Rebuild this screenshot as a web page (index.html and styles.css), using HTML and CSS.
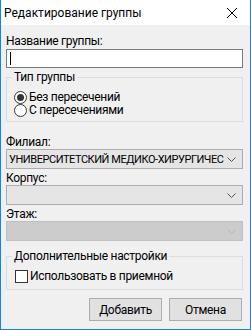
FILE: index.html
```html
<!DOCTYPE html>
<html lang="ru">
<head>
    <meta charset="UTF-8">
    <meta name="viewport" content="width=device-width, initial-scale=1.0">
    <title>Редактирование группы</title>
    <link rel="stylesheet" href="styles.css">
</head>
<body>
    <div class="window">
        <div class="titlebar">
            <span class="title">Редактирование группы</span>
            <svg class="close" width="10" height="10" viewBox="0 0 10 10">
                <path d="M0 0 L10 10 M10 0 L0 10" stroke="#000" stroke-width="1" fill="none"/>
            </svg>
        </div>
        <div class="content">
            <div class="field-label first">Название группы:</div>
            <div class="textbox"><span class="caret"></span></div>

            <fieldset class="group group-type">
                <legend>Тип группы</legend>
                <div class="option"><span class="radio checked"></span>Без пересечений</div>
                <div class="option"><span class="radio"></span>С пересечениями</div>
            </fieldset>

            <div class="field-label">Филиал:</div>
            <div class="combo">
                <span class="combo-text">УНИВЕРСИТЕТСКИЙ МЕДИКО-ХИРУРГИЧЕС</span>
                <span class="combo-arrow">
                    <svg width="9" height="5" viewBox="0 0 9 5"><polyline points="0.5,0.5 4.5,4.5 8.5,0.5" fill="none" stroke="#555" stroke-width="1"/></svg>
                </span>
            </div>

            <div class="field-label">Корпус:</div>
            <div class="combo">
                <span class="combo-text"></span>
                <span class="combo-arrow">
                    <svg width="9" height="5" viewBox="0 0 9 5"><polyline points="0.5,0.5 4.5,4.5 8.5,0.5" fill="none" stroke="#555" stroke-width="1"/></svg>
                </span>
            </div>

            <div class="field-label">Этаж:</div>
            <div class="combo disabled">
                <span class="combo-text"></span>
                <span class="combo-arrow">
                    <svg width="9" height="5" viewBox="0 0 9 5"><polyline points="0.5,0.5 4.5,4.5 8.5,0.5" fill="none" stroke="#b5b5b5" stroke-width="1"/></svg>
                </span>
            </div>

            <fieldset class="group group-extra">
                <legend>Дополнительные настройки</legend>
                <div class="option"><span class="check"></span>Использовать в приемной</div>
            </fieldset>

            <div class="buttons">
                <button class="button">Добавить</button>
                <button class="button">Отмена</button>
            </div>
        </div>
    </div>
</body>
</html>
```

FILE: styles.css
```css
html, body {
    margin: 0;
    padding: 0;
}
body {
    font-family: Roboto, "Liberation Sans", sans-serif;
    font-size: 12px;
    color: #000;
}
.window {
    width: 251px;
    height: 330px;
    box-sizing: border-box;
    border: 1px solid #1883d7;
    border-top: none;
    background-color: #f0f0f0;
    display: flex;
    flex-direction: column;
}
.titlebar {
    height: 25px;
    background-color: #fff;
    display: flex;
    align-items: center;
    justify-content: space-between;
    padding-left: 3px;
}
.title {
    line-height: 15px;
    padding-top: 1px;
}
.close {
    margin-right: 13px;
}
.content {
    flex: 1;
    padding: 9px 7px 0 5px;
    letter-spacing: -0.3px;
}
.field-label {
    line-height: 13px;
    margin-top: 3px;
}
.field-label.first {
    line-height: 15px;
    margin-top: 0;
}
.textbox {
    height: 19px;
    box-sizing: border-box;
    border: 1px solid #7a7a7a;
    background-color: #fff;
    padding: 2px 0 0 3px;
}
.caret {
    display: block;
    width: 1px;
    height: 13px;
    background-color: #000;
}
.group {
    margin: 0;
    border: 1px solid #dcdcdc;
    padding: 6px 5px 4px 5px;
    min-width: 0;
}
.group legend {
    padding: 0 2px;
    line-height: 15px;
}
.group-type {
    margin-top: 2px;
    margin-bottom: 14px;
}
.group-extra {
    margin-top: 8px;
    padding-bottom: 6px;
}
.option {
    height: 13px;
    line-height: 13px;
    display: flex;
    align-items: center;
    gap: 2px;
    margin-left: 2px;
}
.radio {
    width: 13px;
    height: 13px;
    box-sizing: border-box;
    border: 1px solid #333;
    border-radius: 50%;
    background-color: #fff;
    display: flex;
    align-items: center;
    justify-content: center;
}
.radio.checked::after {
    content: "";
    width: 7px;
    height: 7px;
    border-radius: 50%;
    background-color: #333;
}
.check {
    width: 13px;
    height: 13px;
    box-sizing: border-box;
    border: 1px solid #333;
    background-color: #fff;
    margin-left: 1px;
}
.combo {
    height: 20px;
    box-sizing: border-box;
    border: 1px solid #adadad;
    background-color: #e5e5e5;
    display: flex;
    align-items: center;
}
.combo-text {
    flex: 1;
    min-width: 0;
    white-space: nowrap;
    padding-left: 2px;
    line-height: 15px;
    font-size: 11px;
    letter-spacing: -0.45px;
}
.combo-arrow {
    width: 17px;
    display: flex;
    justify-content: center;
    padding-right: 2px;
}
.combo.disabled {
    background-color: #cccccc;
    border-color: #bfbfbf;
}
.buttons {
    margin-top: 8px;
    display: flex;
    justify-content: flex-end;
    gap: 7px;
    padding-right: 1px;
}
.button {
    width: 73px;
    height: 23px;
    border: 1px solid #adadad;
    background-color: #e1e1e1;
    font-family: Roboto, "Liberation Sans", sans-serif;
    font-size: 12px;
    letter-spacing: -0.3px;
    color: #000;
    padding: 0;
}
```
